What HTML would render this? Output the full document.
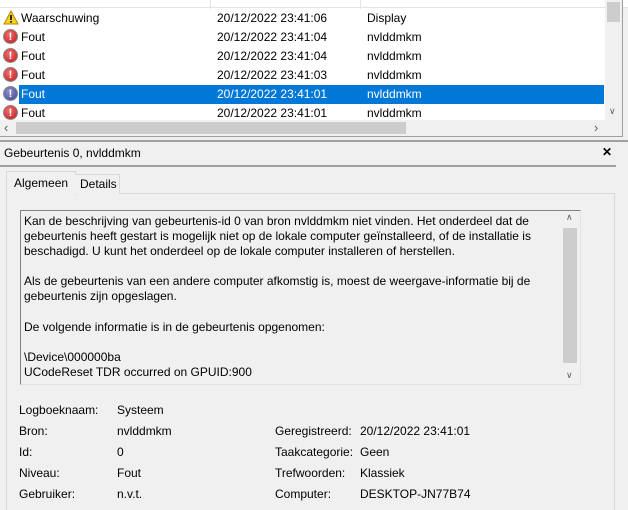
<!DOCTYPE html>
<html><head><style>
body{margin:0;width:628px;height:509px;overflow:hidden;background:#f0f0f0;font-family:"Liberation Sans",sans-serif;font-size:12px;color:#000;position:relative}
.a{position:absolute;white-space:nowrap}
.ico{position:absolute;width:15px;height:15px;border-radius:50%;background:radial-gradient(circle at 40% 35%,#f07070,#c01818);color:#fff;font-weight:bold;font-size:11px;text-align:center;line-height:15px;border:1px solid #888;box-sizing:border-box}
</style></head><body>
<div class="a" style="left:0;top:0;width:605px;height:120px;background:#fff"></div>
<div class="a" style="left:0;top:0;width:628px;height:7px;background:#fff;border-bottom:1px solid #e5e5e5"></div>
<div class="a" style="left:210px;top:0;width:1px;height:9px;background:#e5e5e5"></div>
<div class="a" style="left:360px;top:0;width:1px;height:9px;background:#e5e5e5"></div>
<div class="a" style="left:605px;top:0;width:17px;height:120px;background:#f0f0f0"></div>
<div class="a" style="left:607px;top:2px;width:13px;height:20px;background:#cdcdcd"></div>
<div class="a" style="left:0;top:120px;width:622px;height:16px;background:#f0f0f0"></div>
<div class="a" style="left:16px;top:122px;width:390px;height:12px;background:#cdcdcd"></div>
<div class="a" style="left:4px;top:120px;color:#606060;font-size:13px">&#8249;</div>
<div class="a" style="left:594px;top:120px;color:#606060;font-size:13px">&#8250;</div>
<div class="a" style="left:609px;top:106px;color:#606060;font-size:9px">&#8744;</div>
<div class="a" style="left:622px;top:0;width:1px;height:137px;background:#a0a0a0"></div>
<div class="a" style="left:0;top:136px;width:623px;height:1px;background:#a0a0a0"></div>
<div class="a" style="left:0;top:140px;width:628px;height:2px;background:#a0a0a0"></div>
<div class="a" style="left:19px;top:85px;width:585px;height:19px;background:#0078d7"></div>
<svg class="a" style="left:3px;top:10px" width="16" height="15"><polygon points="8,1 15,14 1,14" fill="#f8d02a" stroke="#b08800"/><rect x="7.2" y="5" width="1.6" height="5" fill="#000"/><rect x="7.2" y="11" width="1.6" height="1.6" fill="#000"/></svg>
<div class="ico" style="left:3px;top:29px">!</div>
<div class="ico" style="left:3px;top:48px">!</div>
<div class="ico" style="left:3px;top:67px">!</div>
<div class="ico" style="left:3px;top:86px;background:radial-gradient(circle at 40% 35%,#9090d0,#404090)">!</div>
<div class="ico" style="left:3px;top:105px">!</div>
<div class="a" style="left:21px;top:11px">Waarschuwing</div><div class="a" style="left:217px;top:11px">20/12/2022 23:41:06</div><div class="a" style="left:367px;top:11px">Display</div>
<div class="a" style="left:21px;top:30px">Fout</div><div class="a" style="left:217px;top:30px">20/12/2022 23:41:04</div><div class="a" style="left:367px;top:30px">nvlddmkm</div>
<div class="a" style="left:21px;top:49px">Fout</div><div class="a" style="left:217px;top:49px">20/12/2022 23:41:04</div><div class="a" style="left:367px;top:49px">nvlddmkm</div>
<div class="a" style="left:21px;top:68px">Fout</div><div class="a" style="left:217px;top:68px">20/12/2022 23:41:03</div><div class="a" style="left:367px;top:68px">nvlddmkm</div>
<div class="a" style="left:21px;top:87px;color:#fff">Fout</div><div class="a" style="left:217px;top:87px;color:#fff">20/12/2022 23:41:01</div><div class="a" style="left:367px;top:87px;color:#fff">nvlddmkm</div>
<div class="a" style="left:21px;top:106px;height:14px;overflow:hidden">Fout</div><div class="a" style="left:217px;top:106px;height:14px;overflow:hidden">20/12/2022 23:41:01</div><div class="a" style="left:367px;top:106px;height:14px;overflow:hidden">nvlddmkm</div>
<div class="a" style="left:0;top:142px;width:628px;height:23px;background:#f0f0f0"></div>
<div class="a" style="left:4px;top:146px">Gebeurtenis 0, nvlddmkm</div>
<div class="a" style="left:602px;top:145px;font-weight:bold;font-size:12px">&#10005;</div>
<div class="a" style="left:0;top:165px;width:616px;height:2px;background:#a0a0a0"></div>
<div class="a" style="left:6px;top:193px;width:607px;height:316px;border:1px solid #d9d9d9;border-bottom:none;background:#f0f0f0"></div>
<div class="a" style="left:6px;top:171px;width:68px;height:23px;border:1px solid #d9d9d9;border-bottom:none;background:#f0f0f0"></div>
<div class="a" style="left:14px;top:176px">Algemeen</div>
<div class="a" style="left:75px;top:174px;width:44px;height:19px;border:1px solid #d9d9d9;border-bottom:none;border-left:none;background:#f0f0f0"></div>
<div class="a" style="left:80px;top:177px">Details</div>
<div class="a" style="left:20px;top:210px;width:559px;height:173px;border:1px solid #828282;border-right-color:#e3e3e3;border-bottom-color:#e3e3e3;background:#f0f0f0"></div>
<div class="a" style="left:563px;top:228px;width:14px;height:135px;background:#cdcdcd"></div>
<div class="a" style="left:566px;top:212px;font-size:9px;color:#606060">&#8743;</div>
<div class="a" style="left:566px;top:370px;font-size:9px;color:#606060">&#8744;</div>
<div class="a" style="left:24px;top:214px;line-height:15.1px;white-space:normal;width:540px">Kan de beschrijving van gebeurtenis-id 0 van bron nvlddmkm niet vinden. Het onderdeel dat de gebeurtenis heeft gestart is mogelijk niet op de lokale computer geïnstalleerd, of de installatie is beschadigd. U kunt het onderdeel op de lokale computer installeren of herstellen.<br><br>Als de gebeurtenis van een andere computer afkomstig is, moest de weergave-informatie bij de gebeurtenis zijn opgeslagen.<br><br>De volgende informatie is in de gebeurtenis opgenomen:<br><br>\Device\000000ba<br>UCodeReset TDR occurred on GPUID:900</div>
<div class="a" style="left:19px;top:403px">Logboeknaam:</div><div class="a" style="left:117px;top:403px">Systeem</div>
<div class="a" style="left:19px;top:424px">Bron:</div><div class="a" style="left:117px;top:424px">nvlddmkm</div>
<div class="a" style="left:275px;top:424px">Geregistreerd:</div><div class="a" style="left:360px;top:424px">20/12/2022 23:41:01</div>
<div class="a" style="left:19px;top:445px">Id:</div><div class="a" style="left:117px;top:445px">0</div>
<div class="a" style="left:275px;top:445px">Taakcategorie:</div><div class="a" style="left:360px;top:445px">Geen</div>
<div class="a" style="left:19px;top:466px">Niveau:</div><div class="a" style="left:117px;top:466px">Fout</div>
<div class="a" style="left:275px;top:466px">Trefwoorden:</div><div class="a" style="left:360px;top:466px">Klassiek</div>
<div class="a" style="left:19px;top:487px">Gebruiker:</div><div class="a" style="left:117px;top:487px">n.v.t.</div>
<div class="a" style="left:275px;top:487px">Computer:</div><div class="a" style="left:360px;top:487px">DESKTOP-JN77B74</div>
</body></html>
